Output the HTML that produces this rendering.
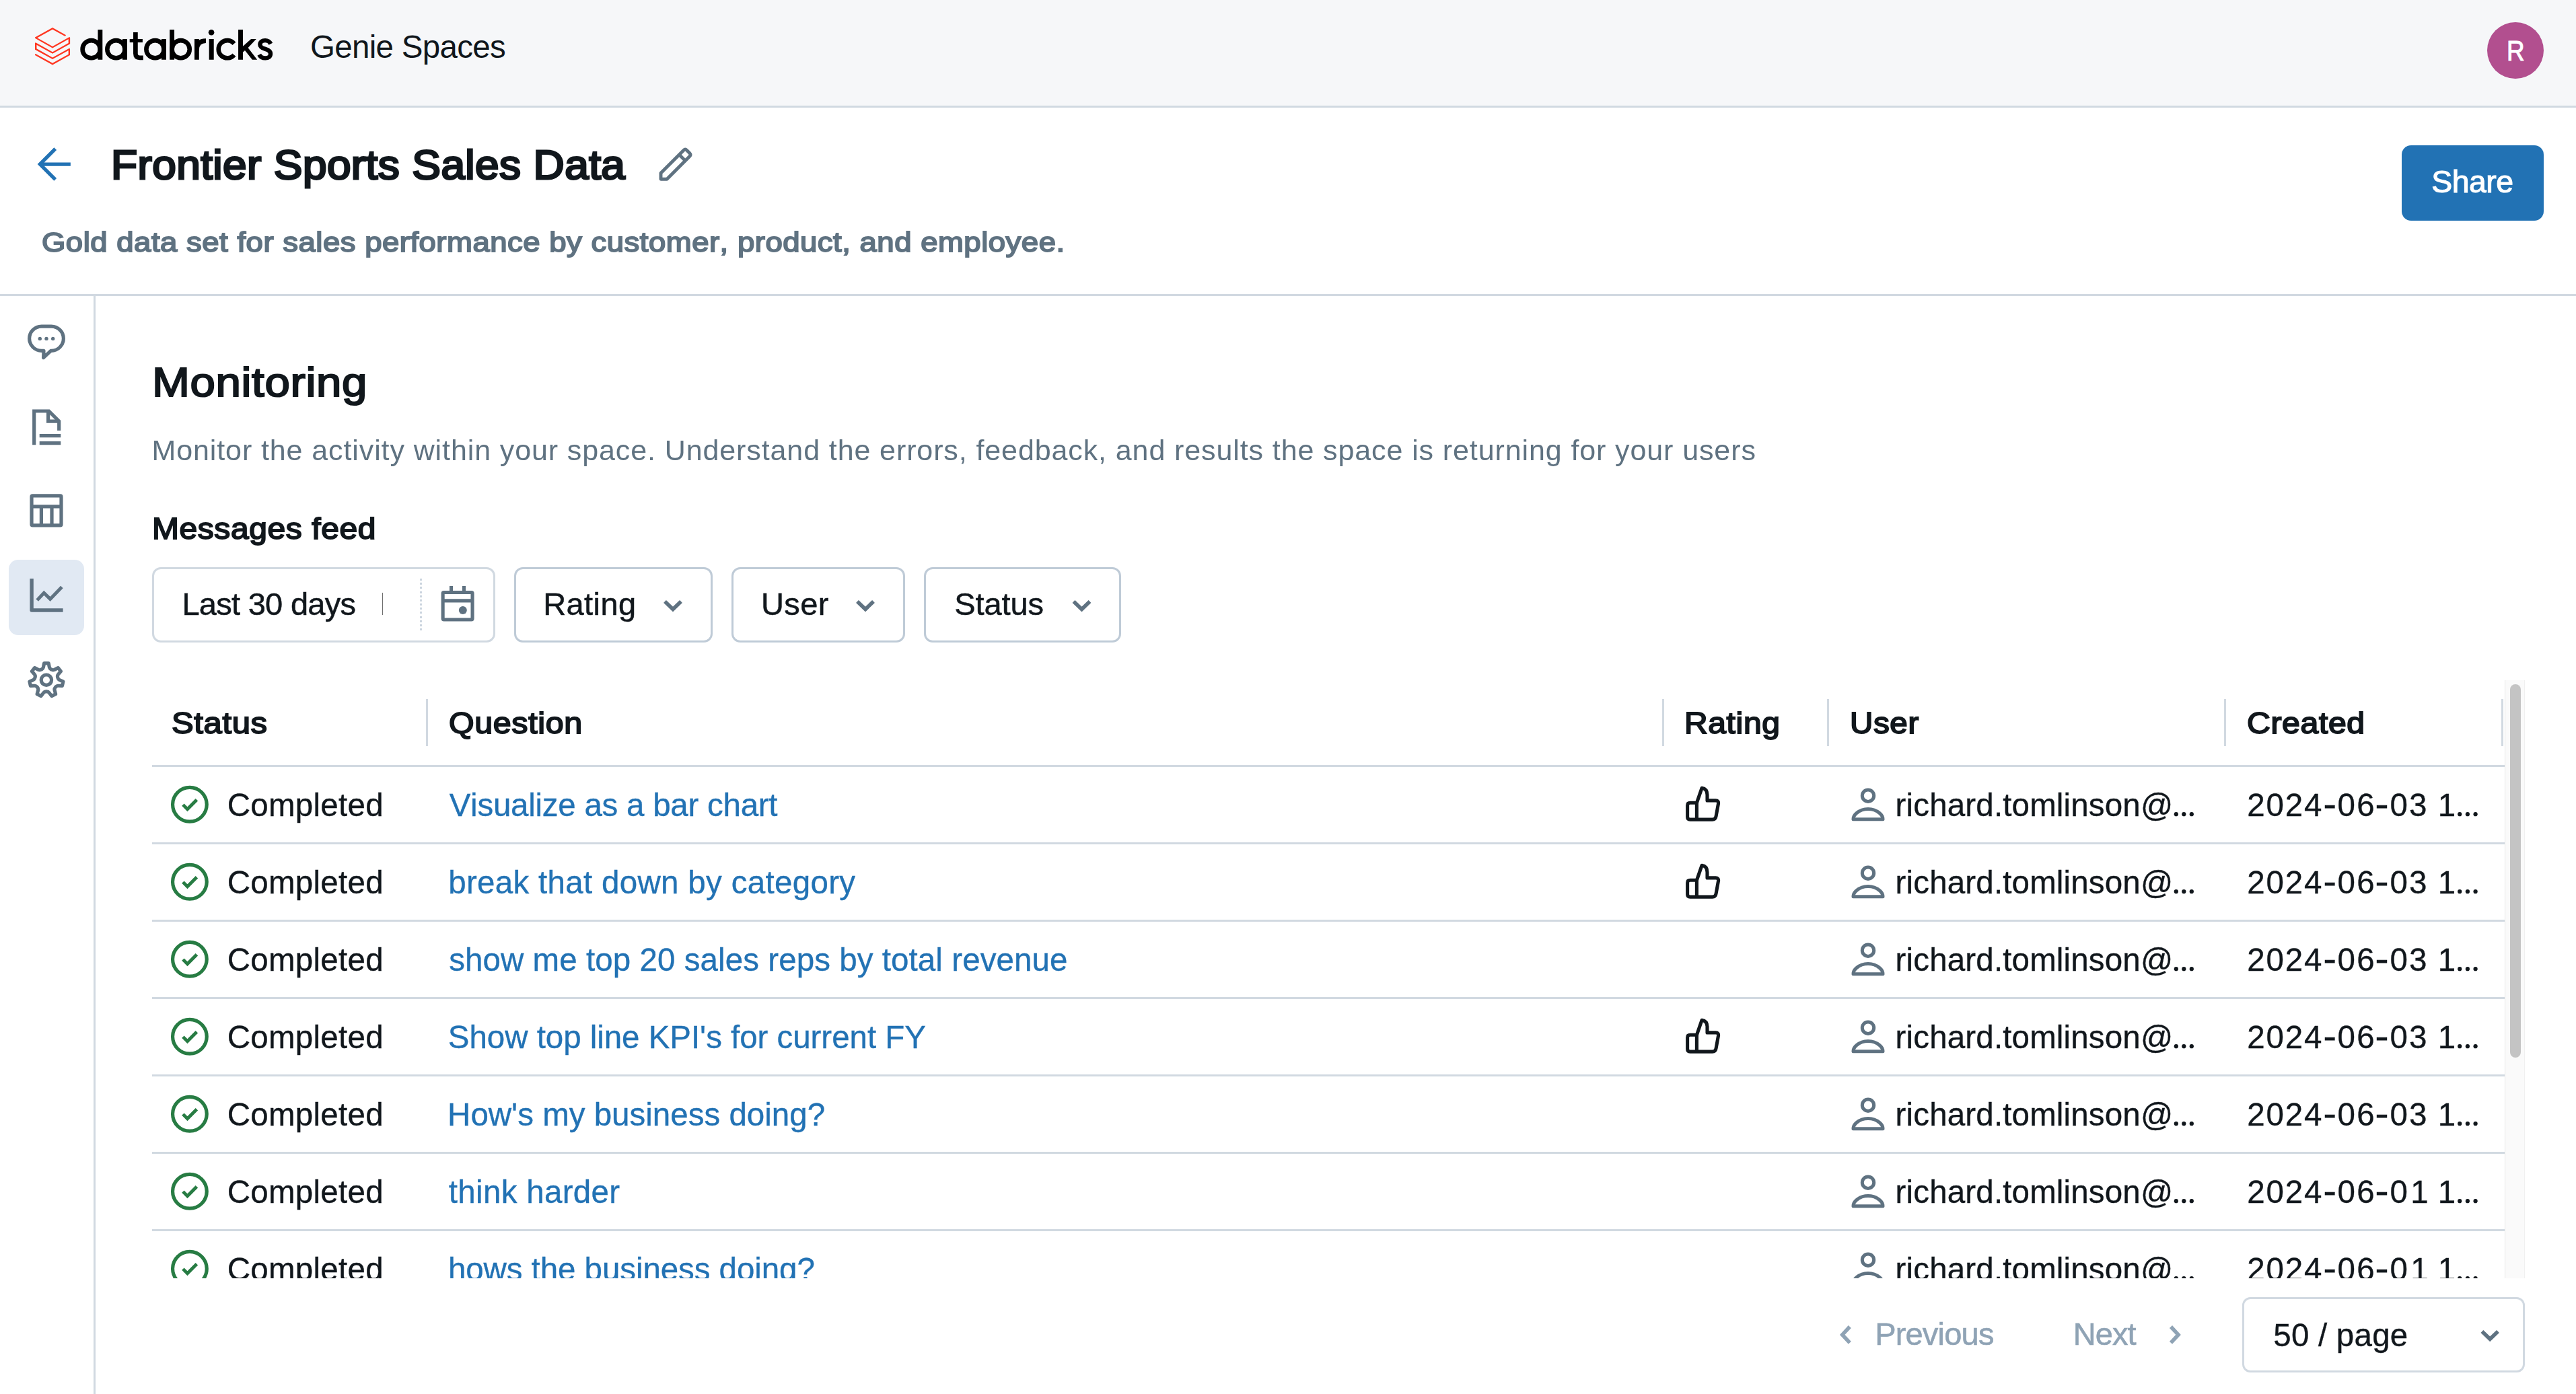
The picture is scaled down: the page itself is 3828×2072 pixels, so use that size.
<!DOCTYPE html>
<html lang="en"><head><meta charset="utf-8"><title>Genie Spaces - Frontier Sports Sales Data</title>
<style>
html,body{margin:0;padding:0;background:#fff;}
body{width:3828px;height:2072px;overflow:hidden;position:relative;font-family:"Liberation Sans",sans-serif;}
.a{position:absolute;display:block;}
.t{position:absolute;display:block;white-space:pre;line-height:1;font-kerning:none;font-variant-ligatures:none;font-family:"Liberation Sans",sans-serif;}
svg{overflow:visible}
</style></head><body>
<div id="app" style="position:absolute;left:0;top:0;width:3828px;height:2072px;transform:translateZ(0)">
<header aria-label="Top bar">
<div class="a" style="left:0px;top:0px;width:3828px;height:157px;background:#f6f7f9;"></div>
<div class="a" style="left:0px;top:157px;width:3828px;height:3px;background:#d1d9e1;"></div>
<svg class="a" style="left:52px;top:41px" width="52" height="55.5" viewBox="0 0 40.1 42" preserveAspectRatio="none"><path d="M40.1,31.1v-7.4l-0.8-0.5L20.1,33.7l-18.2-10l0-4.3l18.2,9.9l20.1-10.9v-7.3l-0.8-0.5L20.1,21.2L2.6,11.6L20.1,2l14.1,7.7l1.1-0.6V8.3L20.1,0L0,10.9V12L20.1,23l18.2-10v4.4l-18.2,10L0.8,16.8L0,17.3v7.4l20.1,10.9l18.2-9.9v4.3l-18.2,10L0.8,29.5L0,30v1.1L20.1,42L40.1,31.1z" fill="#ff3621"/></svg>
<svg class="a" style="left:110px;top:36px;" width="310" height="64" viewBox="110 36 310 64" fill="none"><title>databricks</title><g stroke="#000" stroke-width="6.6" fill="none"><circle cx="135.7" cy="73.2" r="13.1"/><path d="M148.85 44.1V88.75" stroke-width="6.9"/><circle cx="172.45" cy="73.2" r="13.1"/><path d="M185.45 57.95V88.75" stroke-width="6.9"/><path d="M201.4 48.1V79.6Q201.4 85.9 207.8 85.9H212.8" stroke-width="6.7"/><path d="M192.7 60.5H211.9" stroke-width="5.1"/><circle cx="230.5" cy="73.2" r="13.1"/><path d="M243.5 57.95V88.75" stroke-width="6.9"/><path d="M255.6 44.1V88.75" stroke-width="6.9"/><circle cx="268.65" cy="73.2" r="13.1"/><path d="M292.4 88.75V74.5Q292.4 60.7 306 60.7" stroke-width="6.8"/><path d="M292.4 57.95V75" stroke-width="6.8"/><path d="M314.2 57.95V88.75" stroke-width="7.0"/><circle cx="314.1" cy="48.3" r="4.3" fill="#000" stroke="none"/><path d="M347.91 64.87A13.1 13.1 0 1 0 347.91 81.53"/><path d="M357.55 44.1V88.75" stroke-width="7.0"/><path d="M361 68.8L373.1 57.95H380.8L368.6 70.9L382.2 88.75H374.9L364 75.1L361 77.5Z" fill="#000" stroke="none"/><path d="M402.3 65.2C400.6 61.8 397.6 60.1 394.1 60.1C389.5 60.1 386.4 62.6 386.4 66.2C386.4 69.9 389.5 71.5 394.3 72.9C399.3 74.4 402 76.3 402 80C402 83.9 398.8 86.4 394.3 86.4C390.2 86.4 386.9 84.4 385.2 81.2" stroke-width="6.4"/></g></svg>
<span class="t" style="left:461.01px;top:46px;font-size:47.5px;font-weight:400;letter-spacing:-0.698px;color:#11171c;">Genie Spaces</span>
<div class="a" style="left:3696px;top:33px;width:84px;height:84px;background:#b24f8f;border-radius:50%"></div>
<span class="t" style="left:3724.81px;top:55px;font-size:42px;font-weight:400;letter-spacing:0.000px;color:#fff;-webkit-text-stroke:1.0px #fff;transform:scaleX(0.8790);transform-origin:0 0;">R</span>
</header>
<section aria-label="Space header">
<div class="a" style="left:0px;top:437px;width:3828px;height:3px;background:#d1d9e1;"></div>
<svg class="a" style="left:50px;top:214px;" width="62" height="60" viewBox="50 214 62 60" fill="none"><path d="M82.2 221.2L59.4 244.03L82.2 266.86M60 244.03H104.85" stroke="#2272b4" stroke-width="5.3"/></svg>
<span class="t" style="left:164.53px;top:215px;font-size:61px;font-weight:400;letter-spacing:0.400px;color:#11171c;-webkit-text-stroke:3px #11171c;transform:scaleX(1.0482);transform-origin:0 0;">Frontier Sports Sales Data</span>
<svg class="a" style="left:974px;top:214px;" width="62" height="60" viewBox="974 214 62 60" fill="none"><g stroke="#5f7281" stroke-width="4.9" stroke-linejoin="round"><path d="M982.0 266.2V257.32L1016.00 223.32Q1018.26 221.06 1020.52 223.32L1024.98 227.78Q1027.24 230.04 1024.98 232.30L991.08 266.2Z"/><path d="M1009.42 229.90L1018.40 238.88"/></g></svg>
<span class="t" style="left:61.76px;top:339px;font-size:41.5px;font-weight:400;letter-spacing:0.500px;color:#5f7281;-webkit-text-stroke:1.9px #5f7281;transform:scaleX(1.0943);transform-origin:0 0;">Gold data set for sales performance by customer, product, and employee.</span>
<div class="a" style="left:3569px;top:216px;width:211px;height:112px;background:#2272b4;border-radius:14px"></div>
<span class="t" style="left:3613.24px;top:247px;font-size:46.4px;font-weight:400;letter-spacing:-0.512px;color:#fff;-webkit-text-stroke:1.1px #fff;">Share</span>
</section>
<nav aria-label="Space navigation">
<div class="a" style="left:139px;top:440px;width:3px;height:1632px;background:#d1d9e1;"></div>
<div class="a" style="left:13px;top:832px;width:112px;height:112px;background:#e1e9f3;border-radius:14px"></div>
<svg class="a" style="left:36px;top:478px;" width="66" height="62" viewBox="36 478 66 62" fill="none"><path d="M65 521.3H61.7A18.1 18.1 0 0 1 61.7 485.1H76.3A18.1 18.1 0 0 1 76.3 521.3H75.6L64.6 531.6Z" stroke="#5f7281" stroke-width="5.2" stroke-linejoin="round"/><circle cx="59.3" cy="503.4" r="2.7" fill="#5f7281"/><circle cx="69" cy="503.4" r="2.7" fill="#5f7281"/><circle cx="78.7" cy="503.4" r="2.7" fill="#5f7281"/></svg>
<svg class="a" style="left:44px;top:604px;" width="52" height="62" viewBox="44 604 52 62" fill="none"><g stroke="#5f7281" stroke-width="5.2"><path d="M50.7 661.2V611H72.6L87.7 626.1V639.9"/><path d="M71.6 611V626.2H88"/><path d="M58.7 647.7H90.3M58.7 658.6H90.3"/></g></svg>
<svg class="a" style="left:40px;top:730px;" width="58" height="58" viewBox="40 730 58 58" fill="none"><g stroke="#5f7281" stroke-width="5.2"><rect x="47" y="736.9" width="44" height="44" rx="1.5"/><path d="M47 752.8H91M61.4 752.8V781M77 752.8V781"/></g></svg>
<svg class="a" style="left:40px;top:856px;" width="58" height="58" viewBox="40 856 58 58" fill="none"><g stroke="#5f7281"><path d="M47.1 860V907H93.6" stroke-width="5.4" stroke-linejoin="round"/><path d="M55.2 892.1L65.3 881.3L74.6 890.4L91.9 872.5" stroke-width="5"/></g></svg>
<svg class="a" style="left:36px;top:978px;" width="66" height="66" viewBox="36 978 66 66" fill="none"><g stroke="#5f7281" stroke-width="5.2" stroke-linejoin="round"><path d="M65.62 985.81L72.18 985.81L73.36 991.74Q73.79 993.90 75.77 994.85L77.01 995.45Q78.99 996.40 80.95 995.39L86.31 992.62L90.40 997.75L86.50 1002.36Q85.08 1004.04 85.57 1006.19L85.88 1007.53Q86.37 1009.68 88.38 1010.57L93.89 1013.04L92.43 1019.43L86.39 1019.26Q84.20 1019.20 82.82 1020.92L81.97 1022.00Q80.59 1023.72 81.14 1025.85L82.65 1031.70L76.75 1034.54L73.11 1029.72Q71.79 1027.96 69.59 1027.96L68.21 1027.96Q66.01 1027.96 64.69 1029.72L61.05 1034.54L55.15 1031.70L56.66 1025.85Q57.21 1023.72 55.83 1022.00L54.98 1020.92Q53.60 1019.20 51.41 1019.26L45.37 1019.43L43.91 1013.04L49.42 1010.57Q51.43 1009.68 51.92 1007.53L52.23 1006.19Q52.72 1004.04 51.30 1002.36L47.40 997.75L51.49 992.62L56.85 995.39Q58.81 996.40 60.79 995.45L62.03 994.85Q64.01 993.90 64.44 991.74Z"/><circle cx="68.9" cy="1010.7" r="7.7"/></g></svg>
</nav>
<main aria-label="Monitoring">
<span class="t" style="left:225.74px;top:537px;font-size:62px;font-weight:400;letter-spacing:0.600px;color:#11171c;-webkit-text-stroke:2.2px #11171c;transform:scaleX(1.0828);transform-origin:0 0;">Monitoring</span>
<span class="t" style="left:225.51px;top:648px;font-size:43px;font-weight:400;letter-spacing:0.893px;color:#5f7281;">Monitor the activity within your space. Understand the errors, feedback, and results the space is returning for your users</span>
<span class="t" style="left:226.15px;top:764px;font-size:44px;font-weight:400;letter-spacing:0.600px;color:#11171c;-webkit-text-stroke:1.9px #11171c;transform:scaleX(1.0877);transform-origin:0 0;">Messages feed</span>
<div class="a" style="left:226px;top:843px;width:504px;height:106px;border:3px solid #d1d9e1;border-radius:13px;background:#fff"></div>
<span class="t" style="left:270.39px;top:874px;font-size:47px;font-weight:400;letter-spacing:-0.714px;color:#11171c;-webkit-text-stroke:0.5px #11171c;">Last 30 days</span>
<div class="a" style="left:567.8px;top:881px;width:1.3px;height:33px;background:#6e6e6e;"></div>
<div class="a" style="left:624px;top:860px;width:3px;height:77px;background:repeating-linear-gradient(to bottom,#ccd5df 0,#ccd5df 3px,transparent 3px,transparent 6.1667px)"></div>
<svg class="a" style="left:650px;top:866px;" width="60" height="62" viewBox="650 866 60 62" fill="none"><g stroke="#5f7281" stroke-width="5.1"><rect x="658.15" y="880.45" width="43.9" height="40.5" rx="1.5"/><path d="M658 892.9H702M670.5 871V880M689.5 871V880"/></g><circle cx="687.8" cy="906.9" r="6" fill="#5f7281"/></svg>
<div class="a" style="left:764px;top:843px;width:289px;height:106px;border:3px solid #bfcbd7;border-radius:13px;background:#fff"></div>
<span class="t" style="left:807.19px;top:874px;font-size:47px;font-weight:400;letter-spacing:0.425px;color:#11171c;-webkit-text-stroke:0.5px #11171c;">Rating</span>
<svg class="a" style="left:982px;top:888px;" width="36" height="26" viewBox="982 888 36 26" fill="none"><path d="M987.98 893.98L1000.00 905.54L1012.02 893.98" stroke="#5f7281" stroke-width="5.6"/></svg>
<div class="a" style="left:1087px;top:843px;width:252px;height:106px;border:3px solid #bfcbd7;border-radius:13px;background:#fff"></div>
<span class="t" style="left:1130.92px;top:874px;font-size:47px;font-weight:400;letter-spacing:0.425px;color:#11171c;-webkit-text-stroke:0.5px #11171c;">User</span>
<svg class="a" style="left:1268px;top:888px;" width="36" height="26" viewBox="1268 888 36 26" fill="none"><path d="M1273.98 893.98L1286.00 905.54L1298.02 893.98" stroke="#5f7281" stroke-width="5.6"/></svg>
<div class="a" style="left:1373px;top:843px;width:287px;height:106px;border:3px solid #bfcbd7;border-radius:13px;background:#fff"></div>
<span class="t" style="left:1418.32px;top:874px;font-size:47px;font-weight:400;letter-spacing:-0.122px;color:#11171c;-webkit-text-stroke:0.5px #11171c;">Status</span>
<svg class="a" style="left:1590px;top:888px;" width="36" height="26" viewBox="1590 888 36 26" fill="none"><path d="M1595.48 893.98L1607.50 905.54L1619.52 893.98" stroke="#5f7281" stroke-width="5.6"/></svg>
<span class="t" style="left:254.72px;top:1053px;font-size:44.5px;font-weight:400;letter-spacing:0.600px;color:#11171c;-webkit-text-stroke:1.9px #11171c;transform:scaleX(1.0995);transform-origin:0 0;">Status</span>
<span class="t" style="left:667.04px;top:1053px;font-size:44.5px;font-weight:400;letter-spacing:0.600px;color:#11171c;-webkit-text-stroke:1.9px #11171c;transform:scaleX(1.0864);transform-origin:0 0;">Question</span>
<span class="t" style="left:2502.89px;top:1053px;font-size:44.5px;font-weight:400;letter-spacing:0.600px;color:#11171c;-webkit-text-stroke:1.9px #11171c;transform:scaleX(1.0778);transform-origin:0 0;">Rating</span>
<span class="t" style="left:2748.55px;top:1053px;font-size:44.5px;font-weight:400;letter-spacing:0.600px;color:#11171c;-webkit-text-stroke:1.9px #11171c;transform:scaleX(1.0676);transform-origin:0 0;">User</span>
<span class="t" style="left:3338.68px;top:1053px;font-size:44.5px;font-weight:400;letter-spacing:0.600px;color:#11171c;-webkit-text-stroke:1.9px #11171c;transform:scaleX(1.0814);transform-origin:0 0;">Created</span>
<div class="a" style="left:633px;top:1039px;width:3px;height:70px;background:#d1d9e1;"></div>
<div class="a" style="left:2469.5px;top:1039px;width:3px;height:70px;background:#d1d9e1;"></div>
<div class="a" style="left:2714.5px;top:1039px;width:3px;height:70px;background:#d1d9e1;"></div>
<div class="a" style="left:3305px;top:1039px;width:3px;height:70px;background:#d1d9e1;"></div>
<div class="a" style="left:3717px;top:1039px;width:3px;height:70px;background:#d1d9e1;"></div>
<div class="a" style="left:226px;top:1137px;width:3496px;height:3px;background:#d1d9e1;"></div>
<div class="a" style="left:0;top:1140px;width:3722px;height:760px;overflow:hidden"><div class="a" style="left:0;top:-1140px;width:3828px;height:2072px">
<svg class="a" style="left:250px;top:1163px;" width="64" height="64" viewBox="250 1163 64 64" fill="none"><g stroke="#277c43"><circle cx="281.9" cy="1195.80" r="25.35" stroke-width="5.2"/><path d="M271.9 1196.10L278.5 1202.80L292.4 1188.70" stroke-width="4.9"/></g></svg>
<span class="t" style="left:337.76px;top:1173px;font-size:47.5px;font-weight:400;letter-spacing:0.265px;color:#11171c;-webkit-text-stroke:0.35px #11171c;">Completed</span>
<span class="t" style="left:667.67px;top:1173px;font-size:47.5px;font-weight:400;letter-spacing:-0.253px;color:#2272b4;-webkit-text-stroke:0.35px #2272b4;">Visualize as a bar chart</span>
<svg class="a" style="left:2500px;top:1164px;" width="62" height="62" viewBox="2500 1164 62 62" fill="none"><g stroke="#11171c" stroke-width="5.1" stroke-linejoin="round" transform="translate(0 0.00)"><path d="M2521.4 1193.3H2511.5Q2507.6 1193.3 2507.6 1197.2V1214.2Q2507.6 1218.1 2511.5 1218.1H2544.6Q2549.2 1218.1 2550 1213.6L2553.5 1194.5Q2554.3 1189.9 2549.6 1189.9H2537V1181.5Q2537 1172.5 2529 1171.3L2521.4 1193.3Z"/><path d="M2521.4 1193.3V1218.1"/></g></svg>
<svg class="a" style="left:2746px;top:1166px;" width="60" height="60" viewBox="2746 1166 60 60" fill="none"><g stroke="#5f7281" stroke-width="5" stroke-linejoin="round" transform="translate(0 0.00)"><circle cx="2776" cy="1182.7" r="8.7"/><path d="M2754 1217.8Q2754 1212.5 2759 1208.5Q2766 1202.4 2776 1202.4Q2786 1202.4 2793 1208.5Q2798 1212.5 2798 1217.8Z"/></g></svg>
<span class="t" style="left:2816.62px;top:1173px;font-size:47.5px;font-weight:400;letter-spacing:0.154px;color:#11171c;-webkit-text-stroke:0.35px #11171c;">richard.tomlinson@</span>
<svg class="a" style="left:3228px;top:1205px;" width="33" height="10" viewBox="3228 1205 33 10" fill="none"><circle cx="3233.8" cy="1210.2" r="3.1" fill="#11171c"/><circle cx="3245.3" cy="1210.2" r="3.1" fill="#11171c"/><circle cx="3256.8" cy="1210.2" r="3.1" fill="#11171c"/></svg>
<span class="t" style="left:3339.29px;top:1173px;font-size:47.5px;font-weight:400;letter-spacing:1.821px;color:#11171c;-webkit-text-stroke:0.35px #11171c;">2024</span>
<span class="t" style="left:3452.94px;top:1172px;font-size:47.5px;font-weight:400;letter-spacing:0.000px;color:#11171c;-webkit-text-stroke:1.2px #11171c;transform:scaleX(1.1644);transform-origin:0 0;">-</span>
<span class="t" style="left:3473.42px;top:1173px;font-size:47.5px;font-weight:400;letter-spacing:2.458px;color:#11171c;-webkit-text-stroke:0.35px #11171c;">06</span>
<span class="t" style="left:3530.38px;top:1172px;font-size:47.5px;font-weight:400;letter-spacing:0.000px;color:#11171c;-webkit-text-stroke:1.2px #11171c;transform:scaleX(1.2034);transform-origin:0 0;">-</span>
<span class="t" style="left:3551.42px;top:1173px;font-size:47.5px;font-weight:400;letter-spacing:2.258px;color:#11171c;-webkit-text-stroke:0.35px #11171c;">03</span>
<span class="t" style="left:3622.86px;top:1173px;font-size:47.5px;font-weight:400;letter-spacing:0.000px;color:#11171c;-webkit-text-stroke:0.35px #11171c;">1</span>
<svg class="a" style="left:3650px;top:1205px;" width="34" height="10" viewBox="3650 1205 34 10" fill="none"><circle cx="3655.2" cy="1210.2" r="3.1" fill="#11171c"/><circle cx="3666.9" cy="1210.2" r="3.1" fill="#11171c"/><circle cx="3678.6" cy="1210.2" r="3.1" fill="#11171c"/></svg>
<div class="a" style="left:226px;top:1252px;width:3496px;height:3px;background:#d1d9e1;"></div>
<svg class="a" style="left:250px;top:1278px;" width="64" height="64" viewBox="250 1278 64 64" fill="none"><g stroke="#277c43"><circle cx="281.9" cy="1310.80" r="25.35" stroke-width="5.2"/><path d="M271.9 1311.10L278.5 1317.80L292.4 1303.70" stroke-width="4.9"/></g></svg>
<span class="t" style="left:337.76px;top:1288px;font-size:47.5px;font-weight:400;letter-spacing:0.265px;color:#11171c;-webkit-text-stroke:0.35px #11171c;">Completed</span>
<span class="t" style="left:666.21px;top:1288px;font-size:47.5px;font-weight:400;letter-spacing:0.310px;color:#2272b4;-webkit-text-stroke:0.35px #2272b4;">break that down by category</span>
<svg class="a" style="left:2500px;top:1279px;" width="62" height="62" viewBox="2500 1279 62 62" fill="none"><g stroke="#11171c" stroke-width="5.1" stroke-linejoin="round" transform="translate(0 115.00)"><path d="M2521.4 1193.3H2511.5Q2507.6 1193.3 2507.6 1197.2V1214.2Q2507.6 1218.1 2511.5 1218.1H2544.6Q2549.2 1218.1 2550 1213.6L2553.5 1194.5Q2554.3 1189.9 2549.6 1189.9H2537V1181.5Q2537 1172.5 2529 1171.3L2521.4 1193.3Z"/><path d="M2521.4 1193.3V1218.1"/></g></svg>
<svg class="a" style="left:2746px;top:1281px;" width="60" height="60" viewBox="2746 1281 60 60" fill="none"><g stroke="#5f7281" stroke-width="5" stroke-linejoin="round" transform="translate(0 115.00)"><circle cx="2776" cy="1182.7" r="8.7"/><path d="M2754 1217.8Q2754 1212.5 2759 1208.5Q2766 1202.4 2776 1202.4Q2786 1202.4 2793 1208.5Q2798 1212.5 2798 1217.8Z"/></g></svg>
<span class="t" style="left:2816.62px;top:1288px;font-size:47.5px;font-weight:400;letter-spacing:0.154px;color:#11171c;-webkit-text-stroke:0.35px #11171c;">richard.tomlinson@</span>
<svg class="a" style="left:3228px;top:1320px;" width="33" height="10" viewBox="3228 1320 33 10" fill="none"><circle cx="3233.8" cy="1325.2" r="3.1" fill="#11171c"/><circle cx="3245.3" cy="1325.2" r="3.1" fill="#11171c"/><circle cx="3256.8" cy="1325.2" r="3.1" fill="#11171c"/></svg>
<span class="t" style="left:3339.29px;top:1288px;font-size:47.5px;font-weight:400;letter-spacing:1.821px;color:#11171c;-webkit-text-stroke:0.35px #11171c;">2024</span>
<span class="t" style="left:3452.94px;top:1287px;font-size:47.5px;font-weight:400;letter-spacing:0.000px;color:#11171c;-webkit-text-stroke:1.2px #11171c;transform:scaleX(1.1644);transform-origin:0 0;">-</span>
<span class="t" style="left:3473.42px;top:1288px;font-size:47.5px;font-weight:400;letter-spacing:2.458px;color:#11171c;-webkit-text-stroke:0.35px #11171c;">06</span>
<span class="t" style="left:3530.38px;top:1287px;font-size:47.5px;font-weight:400;letter-spacing:0.000px;color:#11171c;-webkit-text-stroke:1.2px #11171c;transform:scaleX(1.2034);transform-origin:0 0;">-</span>
<span class="t" style="left:3551.42px;top:1288px;font-size:47.5px;font-weight:400;letter-spacing:2.258px;color:#11171c;-webkit-text-stroke:0.35px #11171c;">03</span>
<span class="t" style="left:3622.86px;top:1288px;font-size:47.5px;font-weight:400;letter-spacing:0.000px;color:#11171c;-webkit-text-stroke:0.35px #11171c;">1</span>
<svg class="a" style="left:3650px;top:1320px;" width="34" height="10" viewBox="3650 1320 34 10" fill="none"><circle cx="3655.2" cy="1325.2" r="3.1" fill="#11171c"/><circle cx="3666.9" cy="1325.2" r="3.1" fill="#11171c"/><circle cx="3678.6" cy="1325.2" r="3.1" fill="#11171c"/></svg>
<div class="a" style="left:226px;top:1367px;width:3496px;height:3px;background:#d1d9e1;"></div>
<svg class="a" style="left:250px;top:1393px;" width="64" height="64" viewBox="250 1393 64 64" fill="none"><g stroke="#277c43"><circle cx="281.9" cy="1425.80" r="25.35" stroke-width="5.2"/><path d="M271.9 1426.10L278.5 1432.80L292.4 1418.70" stroke-width="4.9"/></g></svg>
<span class="t" style="left:337.76px;top:1403px;font-size:47.5px;font-weight:400;letter-spacing:0.265px;color:#11171c;-webkit-text-stroke:0.35px #11171c;">Completed</span>
<span class="t" style="left:667.15px;top:1403px;font-size:47.5px;font-weight:400;letter-spacing:0.073px;color:#2272b4;-webkit-text-stroke:0.35px #2272b4;">show me top 20 sales reps by total revenue</span>
<svg class="a" style="left:2746px;top:1396px;" width="60" height="60" viewBox="2746 1396 60 60" fill="none"><g stroke="#5f7281" stroke-width="5" stroke-linejoin="round" transform="translate(0 230.00)"><circle cx="2776" cy="1182.7" r="8.7"/><path d="M2754 1217.8Q2754 1212.5 2759 1208.5Q2766 1202.4 2776 1202.4Q2786 1202.4 2793 1208.5Q2798 1212.5 2798 1217.8Z"/></g></svg>
<span class="t" style="left:2816.62px;top:1403px;font-size:47.5px;font-weight:400;letter-spacing:0.154px;color:#11171c;-webkit-text-stroke:0.35px #11171c;">richard.tomlinson@</span>
<svg class="a" style="left:3228px;top:1435px;" width="33" height="10" viewBox="3228 1435 33 10" fill="none"><circle cx="3233.8" cy="1440.2" r="3.1" fill="#11171c"/><circle cx="3245.3" cy="1440.2" r="3.1" fill="#11171c"/><circle cx="3256.8" cy="1440.2" r="3.1" fill="#11171c"/></svg>
<span class="t" style="left:3339.29px;top:1403px;font-size:47.5px;font-weight:400;letter-spacing:1.821px;color:#11171c;-webkit-text-stroke:0.35px #11171c;">2024</span>
<span class="t" style="left:3452.94px;top:1402px;font-size:47.5px;font-weight:400;letter-spacing:0.000px;color:#11171c;-webkit-text-stroke:1.2px #11171c;transform:scaleX(1.1644);transform-origin:0 0;">-</span>
<span class="t" style="left:3473.42px;top:1403px;font-size:47.5px;font-weight:400;letter-spacing:2.458px;color:#11171c;-webkit-text-stroke:0.35px #11171c;">06</span>
<span class="t" style="left:3530.38px;top:1402px;font-size:47.5px;font-weight:400;letter-spacing:0.000px;color:#11171c;-webkit-text-stroke:1.2px #11171c;transform:scaleX(1.2034);transform-origin:0 0;">-</span>
<span class="t" style="left:3551.42px;top:1403px;font-size:47.5px;font-weight:400;letter-spacing:2.258px;color:#11171c;-webkit-text-stroke:0.35px #11171c;">03</span>
<span class="t" style="left:3622.86px;top:1403px;font-size:47.5px;font-weight:400;letter-spacing:0.000px;color:#11171c;-webkit-text-stroke:0.35px #11171c;">1</span>
<svg class="a" style="left:3650px;top:1435px;" width="34" height="10" viewBox="3650 1435 34 10" fill="none"><circle cx="3655.2" cy="1440.2" r="3.1" fill="#11171c"/><circle cx="3666.9" cy="1440.2" r="3.1" fill="#11171c"/><circle cx="3678.6" cy="1440.2" r="3.1" fill="#11171c"/></svg>
<div class="a" style="left:226px;top:1482px;width:3496px;height:3px;background:#d1d9e1;"></div>
<svg class="a" style="left:250px;top:1508px;" width="64" height="64" viewBox="250 1508 64 64" fill="none"><g stroke="#277c43"><circle cx="281.9" cy="1540.80" r="25.35" stroke-width="5.2"/><path d="M271.9 1541.10L278.5 1547.80L292.4 1533.70" stroke-width="4.9"/></g></svg>
<span class="t" style="left:337.76px;top:1518px;font-size:47.5px;font-weight:400;letter-spacing:0.265px;color:#11171c;-webkit-text-stroke:0.35px #11171c;">Completed</span>
<span class="t" style="left:665.82px;top:1518px;font-size:47.5px;font-weight:400;letter-spacing:-0.038px;color:#2272b4;-webkit-text-stroke:0.35px #2272b4;">Show top line KPI's for current FY</span>
<svg class="a" style="left:2500px;top:1509px;" width="62" height="62" viewBox="2500 1509 62 62" fill="none"><g stroke="#11171c" stroke-width="5.1" stroke-linejoin="round" transform="translate(0 345.00)"><path d="M2521.4 1193.3H2511.5Q2507.6 1193.3 2507.6 1197.2V1214.2Q2507.6 1218.1 2511.5 1218.1H2544.6Q2549.2 1218.1 2550 1213.6L2553.5 1194.5Q2554.3 1189.9 2549.6 1189.9H2537V1181.5Q2537 1172.5 2529 1171.3L2521.4 1193.3Z"/><path d="M2521.4 1193.3V1218.1"/></g></svg>
<svg class="a" style="left:2746px;top:1511px;" width="60" height="60" viewBox="2746 1511 60 60" fill="none"><g stroke="#5f7281" stroke-width="5" stroke-linejoin="round" transform="translate(0 345.00)"><circle cx="2776" cy="1182.7" r="8.7"/><path d="M2754 1217.8Q2754 1212.5 2759 1208.5Q2766 1202.4 2776 1202.4Q2786 1202.4 2793 1208.5Q2798 1212.5 2798 1217.8Z"/></g></svg>
<span class="t" style="left:2816.62px;top:1518px;font-size:47.5px;font-weight:400;letter-spacing:0.154px;color:#11171c;-webkit-text-stroke:0.35px #11171c;">richard.tomlinson@</span>
<svg class="a" style="left:3228px;top:1550px;" width="33" height="10" viewBox="3228 1550 33 10" fill="none"><circle cx="3233.8" cy="1555.2" r="3.1" fill="#11171c"/><circle cx="3245.3" cy="1555.2" r="3.1" fill="#11171c"/><circle cx="3256.8" cy="1555.2" r="3.1" fill="#11171c"/></svg>
<span class="t" style="left:3339.29px;top:1518px;font-size:47.5px;font-weight:400;letter-spacing:1.821px;color:#11171c;-webkit-text-stroke:0.35px #11171c;">2024</span>
<span class="t" style="left:3452.94px;top:1517px;font-size:47.5px;font-weight:400;letter-spacing:0.000px;color:#11171c;-webkit-text-stroke:1.2px #11171c;transform:scaleX(1.1644);transform-origin:0 0;">-</span>
<span class="t" style="left:3473.42px;top:1518px;font-size:47.5px;font-weight:400;letter-spacing:2.458px;color:#11171c;-webkit-text-stroke:0.35px #11171c;">06</span>
<span class="t" style="left:3530.38px;top:1517px;font-size:47.5px;font-weight:400;letter-spacing:0.000px;color:#11171c;-webkit-text-stroke:1.2px #11171c;transform:scaleX(1.2034);transform-origin:0 0;">-</span>
<span class="t" style="left:3551.42px;top:1518px;font-size:47.5px;font-weight:400;letter-spacing:2.258px;color:#11171c;-webkit-text-stroke:0.35px #11171c;">03</span>
<span class="t" style="left:3622.86px;top:1518px;font-size:47.5px;font-weight:400;letter-spacing:0.000px;color:#11171c;-webkit-text-stroke:0.35px #11171c;">1</span>
<svg class="a" style="left:3650px;top:1550px;" width="34" height="10" viewBox="3650 1550 34 10" fill="none"><circle cx="3655.2" cy="1555.2" r="3.1" fill="#11171c"/><circle cx="3666.9" cy="1555.2" r="3.1" fill="#11171c"/><circle cx="3678.6" cy="1555.2" r="3.1" fill="#11171c"/></svg>
<div class="a" style="left:226px;top:1597px;width:3496px;height:3px;background:#d1d9e1;"></div>
<svg class="a" style="left:250px;top:1623px;" width="64" height="64" viewBox="250 1623 64 64" fill="none"><g stroke="#277c43"><circle cx="281.9" cy="1655.80" r="25.35" stroke-width="5.2"/><path d="M271.9 1656.10L278.5 1662.80L292.4 1648.70" stroke-width="4.9"/></g></svg>
<span class="t" style="left:337.76px;top:1633px;font-size:47.5px;font-weight:400;letter-spacing:0.265px;color:#11171c;-webkit-text-stroke:0.35px #11171c;">Completed</span>
<span class="t" style="left:665.08px;top:1633px;font-size:47.5px;font-weight:400;letter-spacing:0.006px;color:#2272b4;-webkit-text-stroke:0.35px #2272b4;">How's my business doing?</span>
<svg class="a" style="left:2746px;top:1626px;" width="60" height="60" viewBox="2746 1626 60 60" fill="none"><g stroke="#5f7281" stroke-width="5" stroke-linejoin="round" transform="translate(0 460.00)"><circle cx="2776" cy="1182.7" r="8.7"/><path d="M2754 1217.8Q2754 1212.5 2759 1208.5Q2766 1202.4 2776 1202.4Q2786 1202.4 2793 1208.5Q2798 1212.5 2798 1217.8Z"/></g></svg>
<span class="t" style="left:2816.62px;top:1633px;font-size:47.5px;font-weight:400;letter-spacing:0.154px;color:#11171c;-webkit-text-stroke:0.35px #11171c;">richard.tomlinson@</span>
<svg class="a" style="left:3228px;top:1665px;" width="33" height="10" viewBox="3228 1665 33 10" fill="none"><circle cx="3233.8" cy="1670.2" r="3.1" fill="#11171c"/><circle cx="3245.3" cy="1670.2" r="3.1" fill="#11171c"/><circle cx="3256.8" cy="1670.2" r="3.1" fill="#11171c"/></svg>
<span class="t" style="left:3339.29px;top:1633px;font-size:47.5px;font-weight:400;letter-spacing:1.821px;color:#11171c;-webkit-text-stroke:0.35px #11171c;">2024</span>
<span class="t" style="left:3452.94px;top:1632px;font-size:47.5px;font-weight:400;letter-spacing:0.000px;color:#11171c;-webkit-text-stroke:1.2px #11171c;transform:scaleX(1.1644);transform-origin:0 0;">-</span>
<span class="t" style="left:3473.42px;top:1633px;font-size:47.5px;font-weight:400;letter-spacing:2.458px;color:#11171c;-webkit-text-stroke:0.35px #11171c;">06</span>
<span class="t" style="left:3530.38px;top:1632px;font-size:47.5px;font-weight:400;letter-spacing:0.000px;color:#11171c;-webkit-text-stroke:1.2px #11171c;transform:scaleX(1.2034);transform-origin:0 0;">-</span>
<span class="t" style="left:3551.42px;top:1633px;font-size:47.5px;font-weight:400;letter-spacing:2.258px;color:#11171c;-webkit-text-stroke:0.35px #11171c;">03</span>
<span class="t" style="left:3622.86px;top:1633px;font-size:47.5px;font-weight:400;letter-spacing:0.000px;color:#11171c;-webkit-text-stroke:0.35px #11171c;">1</span>
<svg class="a" style="left:3650px;top:1665px;" width="34" height="10" viewBox="3650 1665 34 10" fill="none"><circle cx="3655.2" cy="1670.2" r="3.1" fill="#11171c"/><circle cx="3666.9" cy="1670.2" r="3.1" fill="#11171c"/><circle cx="3678.6" cy="1670.2" r="3.1" fill="#11171c"/></svg>
<div class="a" style="left:226px;top:1712px;width:3496px;height:3px;background:#d1d9e1;"></div>
<svg class="a" style="left:250px;top:1738px;" width="64" height="64" viewBox="250 1738 64 64" fill="none"><g stroke="#277c43"><circle cx="281.9" cy="1770.80" r="25.35" stroke-width="5.2"/><path d="M271.9 1771.10L278.5 1777.80L292.4 1763.70" stroke-width="4.9"/></g></svg>
<span class="t" style="left:337.76px;top:1748px;font-size:47.5px;font-weight:400;letter-spacing:0.265px;color:#11171c;-webkit-text-stroke:0.35px #11171c;">Completed</span>
<span class="t" style="left:666.86px;top:1748px;font-size:47.5px;font-weight:400;letter-spacing:0.302px;color:#2272b4;-webkit-text-stroke:0.35px #2272b4;">think harder</span>
<svg class="a" style="left:2746px;top:1741px;" width="60" height="60" viewBox="2746 1741 60 60" fill="none"><g stroke="#5f7281" stroke-width="5" stroke-linejoin="round" transform="translate(0 575.00)"><circle cx="2776" cy="1182.7" r="8.7"/><path d="M2754 1217.8Q2754 1212.5 2759 1208.5Q2766 1202.4 2776 1202.4Q2786 1202.4 2793 1208.5Q2798 1212.5 2798 1217.8Z"/></g></svg>
<span class="t" style="left:2816.62px;top:1748px;font-size:47.5px;font-weight:400;letter-spacing:0.154px;color:#11171c;-webkit-text-stroke:0.35px #11171c;">richard.tomlinson@</span>
<svg class="a" style="left:3228px;top:1780px;" width="33" height="10" viewBox="3228 1780 33 10" fill="none"><circle cx="3233.8" cy="1785.2" r="3.1" fill="#11171c"/><circle cx="3245.3" cy="1785.2" r="3.1" fill="#11171c"/><circle cx="3256.8" cy="1785.2" r="3.1" fill="#11171c"/></svg>
<span class="t" style="left:3339.29px;top:1748px;font-size:47.5px;font-weight:400;letter-spacing:1.821px;color:#11171c;-webkit-text-stroke:0.35px #11171c;">2024</span>
<span class="t" style="left:3452.94px;top:1747px;font-size:47.5px;font-weight:400;letter-spacing:0.000px;color:#11171c;-webkit-text-stroke:1.2px #11171c;transform:scaleX(1.1644);transform-origin:0 0;">-</span>
<span class="t" style="left:3473.42px;top:1748px;font-size:47.5px;font-weight:400;letter-spacing:2.458px;color:#11171c;-webkit-text-stroke:0.35px #11171c;">06</span>
<span class="t" style="left:3530.38px;top:1747px;font-size:47.5px;font-weight:400;letter-spacing:0.000px;color:#11171c;-webkit-text-stroke:1.2px #11171c;transform:scaleX(1.2034);transform-origin:0 0;">-</span>
<span class="t" style="left:3551.42px;top:1748px;font-size:47.5px;font-weight:400;letter-spacing:4.390px;color:#11171c;-webkit-text-stroke:0.35px #11171c;">01</span>
<span class="t" style="left:3622.86px;top:1748px;font-size:47.5px;font-weight:400;letter-spacing:0.000px;color:#11171c;-webkit-text-stroke:0.35px #11171c;">1</span>
<svg class="a" style="left:3650px;top:1780px;" width="34" height="10" viewBox="3650 1780 34 10" fill="none"><circle cx="3655.2" cy="1785.2" r="3.1" fill="#11171c"/><circle cx="3666.9" cy="1785.2" r="3.1" fill="#11171c"/><circle cx="3678.6" cy="1785.2" r="3.1" fill="#11171c"/></svg>
<div class="a" style="left:226px;top:1827px;width:3496px;height:3px;background:#d1d9e1;"></div>
<svg class="a" style="left:250px;top:1853px;" width="64" height="64" viewBox="250 1853 64 64" fill="none"><g stroke="#277c43"><circle cx="281.9" cy="1885.80" r="25.35" stroke-width="5.2"/><path d="M271.9 1886.10L278.5 1892.80L292.4 1878.70" stroke-width="4.9"/></g></svg>
<span class="t" style="left:337.76px;top:1863px;font-size:47.5px;font-weight:400;letter-spacing:0.265px;color:#11171c;-webkit-text-stroke:0.35px #11171c;">Completed</span>
<span class="t" style="left:665.88px;top:1863px;font-size:47.5px;font-weight:400;letter-spacing:-0.070px;color:#2272b4;-webkit-text-stroke:0.35px #2272b4;">hows the business doing?</span>
<svg class="a" style="left:2746px;top:1856px;" width="60" height="60" viewBox="2746 1856 60 60" fill="none"><g stroke="#5f7281" stroke-width="5" stroke-linejoin="round" transform="translate(0 690.00)"><circle cx="2776" cy="1182.7" r="8.7"/><path d="M2754 1217.8Q2754 1212.5 2759 1208.5Q2766 1202.4 2776 1202.4Q2786 1202.4 2793 1208.5Q2798 1212.5 2798 1217.8Z"/></g></svg>
<span class="t" style="left:2816.62px;top:1863px;font-size:47.5px;font-weight:400;letter-spacing:0.154px;color:#11171c;-webkit-text-stroke:0.35px #11171c;">richard.tomlinson@</span>
<svg class="a" style="left:3228px;top:1895px;" width="33" height="10" viewBox="3228 1895 33 10" fill="none"><circle cx="3233.8" cy="1900.2" r="3.1" fill="#11171c"/><circle cx="3245.3" cy="1900.2" r="3.1" fill="#11171c"/><circle cx="3256.8" cy="1900.2" r="3.1" fill="#11171c"/></svg>
<span class="t" style="left:3339.29px;top:1863px;font-size:47.5px;font-weight:400;letter-spacing:1.821px;color:#11171c;-webkit-text-stroke:0.35px #11171c;">2024</span>
<span class="t" style="left:3452.94px;top:1862px;font-size:47.5px;font-weight:400;letter-spacing:0.000px;color:#11171c;-webkit-text-stroke:1.2px #11171c;transform:scaleX(1.1644);transform-origin:0 0;">-</span>
<span class="t" style="left:3473.42px;top:1863px;font-size:47.5px;font-weight:400;letter-spacing:2.458px;color:#11171c;-webkit-text-stroke:0.35px #11171c;">06</span>
<span class="t" style="left:3530.38px;top:1862px;font-size:47.5px;font-weight:400;letter-spacing:0.000px;color:#11171c;-webkit-text-stroke:1.2px #11171c;transform:scaleX(1.2034);transform-origin:0 0;">-</span>
<span class="t" style="left:3551.42px;top:1863px;font-size:47.5px;font-weight:400;letter-spacing:4.390px;color:#11171c;-webkit-text-stroke:0.35px #11171c;">01</span>
<span class="t" style="left:3622.86px;top:1863px;font-size:47.5px;font-weight:400;letter-spacing:0.000px;color:#11171c;-webkit-text-stroke:0.35px #11171c;">1</span>
<svg class="a" style="left:3650px;top:1895px;" width="34" height="10" viewBox="3650 1895 34 10" fill="none"><circle cx="3655.2" cy="1900.2" r="3.1" fill="#11171c"/><circle cx="3666.9" cy="1900.2" r="3.1" fill="#11171c"/><circle cx="3678.6" cy="1900.2" r="3.1" fill="#11171c"/></svg>
<div class="a" style="left:226px;top:1942px;width:3496px;height:3px;background:#d1d9e1;"></div>
</div></div>
<div class="a" style="left:3722px;top:1011px;width:30px;height:889px;background:#fafafa;border-left:1.6px solid #e8e8e8;border-right:1.6px solid #f0f0f0;box-sizing:border-box"></div>
<div class="a" style="left:3730.2px;top:1017px;width:15.6px;height:555px;background:#c4c4c4;border-radius:8px"></div>
<svg class="a" style="left:2730px;top:1966px;" width="25" height="36" viewBox="2730 1966 25 36" fill="none"><path d="M2748.82 1971.98L2737.76 1983.90L2748.82 1995.82" stroke="#8fa3b5" stroke-width="5.6"/></svg>
<span class="t" style="left:2786.14px;top:1959px;font-size:47px;font-weight:400;letter-spacing:-0.801px;color:#8fa3b5;-webkit-text-stroke:0.6px #8fa3b5;">Previous</span>
<span class="t" style="left:3080.74px;top:1959px;font-size:47px;font-weight:400;letter-spacing:-0.946px;color:#8fa3b5;-webkit-text-stroke:0.6px #8fa3b5;">Next</span>
<svg class="a" style="left:3220px;top:1966px;" width="25" height="36" viewBox="3220 1966 25 36" fill="none"><path d="M3225.98 1971.98L3237.04 1983.90L3225.98 1995.82" stroke="#8fa3b5" stroke-width="5.6"/></svg>
<div class="a" style="left:3332px;top:1928px;width:414px;height:106px;border:3px solid #d1d9e1;border-radius:12px;background:#fff"></div>
<span class="t" style="left:3378.27px;top:1961px;font-size:47.5px;font-weight:400;letter-spacing:0.233px;color:#11171c;-webkit-text-stroke:0.35px #11171c;">50 / page</span>
<svg class="a" style="left:3682px;top:1973px;" width="36" height="25" viewBox="3682 1973 36 25" fill="none"><path d="M3688.38 1978.98L3700.20 1990.34L3712.02 1978.98" stroke="#5f7281" stroke-width="5.6"/></svg>
</main>
</div>
</body></html>
